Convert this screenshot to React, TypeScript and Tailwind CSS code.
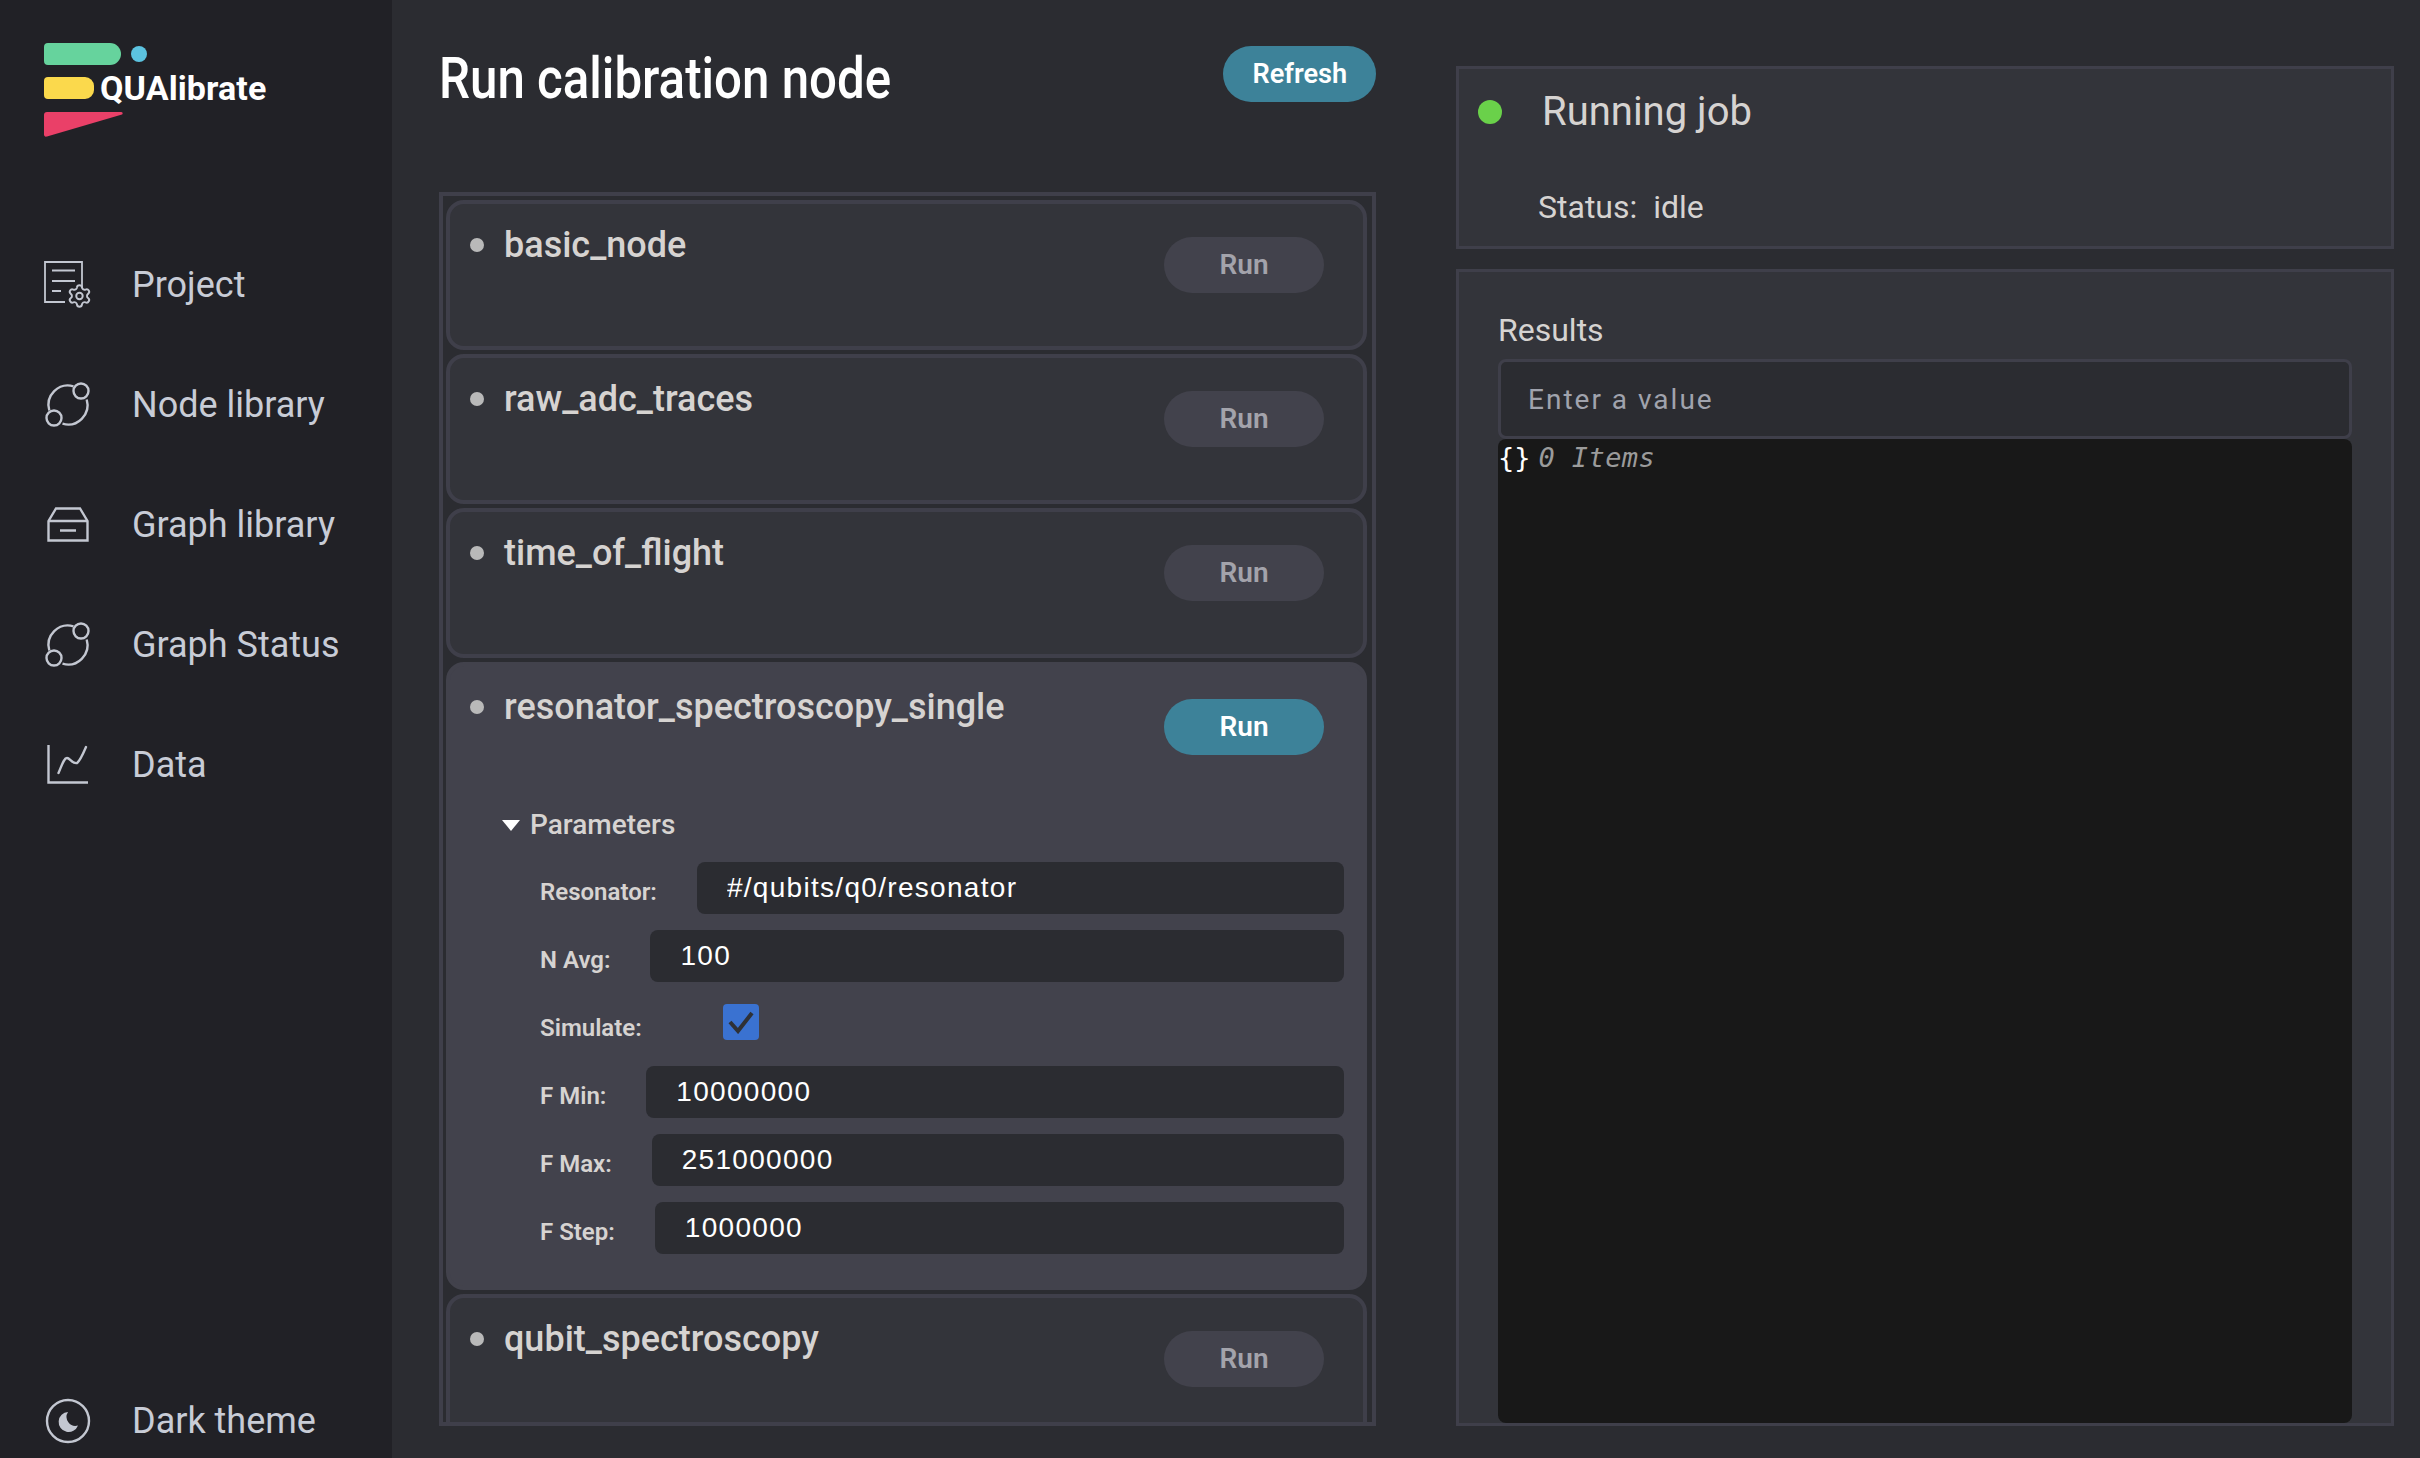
import type { ReactNode } from "react";

const navItems = [
  { label: "Project", icon: "project" },
  { label: "Node library", icon: "orbit" },
  { label: "Graph library", icon: "tray" },
  { label: "Graph Status", icon: "orbit" },
  { label: "Data", icon: "chart" },
];

function NavIcon({ name }: { name: string }) {
  const common = {
    fill: "none",
    stroke: "#c3c7d1",
    strokeWidth: 2.4,
  };
  if (name === "project") {
    return (
      <svg width="48" height="48" viewBox="0 0 48 48" {...common} strokeWidth={1.8}>
        <path d="M21 41H1V1h37v26" />
        <path d="M8 9.500h23M8 20h23M8 30h9" />
        <g transform="translate(22.500 22) scale(1.08)" strokeWidth={1.8}>
          <path d="M9.671 4.136a2.34 2.34 0 0 1 4.659 0 2.34 2.34 0 0 0 3.319 1.915 2.34 2.34 0 0 1 2.33 4.033 2.34 2.34 0 0 0 0 3.831 2.34 2.34 0 0 1-2.33 4.033 2.34 2.34 0 0 0-3.319 1.915 2.34 2.34 0 0 1-4.659 0 2.34 2.34 0 0 0-3.32-1.915 2.34 2.34 0 0 1-2.33-4.033 2.34 2.34 0 0 0 0-3.831A2.34 2.34 0 0 1 6.35 6.051a2.34 2.34 0 0 0 3.32-1.915" />
          <circle cx="12" cy="12" r="3" />
        </g>
      </svg>
    );
  }
  if (name === "orbit") {
    return (
      <svg width="48" height="48" viewBox="0 0 48 48" {...common}>
        <path d="M29.500 5.300A19.500 19.500 0 0 0 5.300 29.500" />
        <path d="M42.700 18.500A19.500 19.500 0 0 1 18.500 42.700" />
        <circle cx="37" cy="10" r="7.500" />
        <circle cx="10" cy="37" r="7.500" />
      </svg>
    );
  }
  if (name === "tray") {
    return (
      <svg width="48" height="48" viewBox="0 0 48 48" {...common}>
        <path d="M4.500 20 12 7.500h24L43.500 20v19.500h-39z" />
        <path d="M4.500 20h39M16 29.500h16" />
      </svg>
    );
  }
  return (
    <svg width="48" height="48" viewBox="0 0 48 48" {...common}>
      <path d="M4.500 4v37.500H44" />
      <path d="M14.500 32c3.500-8 5.500-15 8.500-15s5 6 10 5c3-2 6-9 9-16" strokeLinecap="round" />
    </svg>
  );
}

function Logo() {
  return (
    <div className="flex flex-col pl-[44px] pt-[43px]">
      <div className="flex items-center gap-[10px]">
        <div className="h-[22px] w-[77px] rounded-l-[4px] rounded-r-[11px] bg-[#66d39d]" />
        <div className="h-4 w-4 rounded-full bg-[#5cc3e0]" />
      </div>
      <div className="mt-3 flex h-[22px] items-center gap-[6px]">
        <div className="h-[22px] w-[50px] rounded-l-[4px] rounded-r-[9px] bg-[#fbd94c]" />
        <span className="text-[34px] leading-none font-bold tracking-[0.1px] text-white">QUAlibrate</span>
      </div>
      <svg className="mt-[13px]" width="80" height="25" viewBox="0 0 80 25">
        <path d="M3 0h74c2 0 2 2 1 2.500L3 24.500c-2 .5-3-.5-3-2V3c0-2 1-3 3-3z" fill="#ea4068" />
      </svg>
    </div>
  );
}

function Sidebar() {
  return (
    <aside className="flex h-full w-[392px] shrink-0 flex-col bg-[#212126]">
      <Logo />
      <nav className="mt-[88px] flex flex-col">
        {navItems.map((item) => (
          <div key={item.label} className="flex h-[120px] items-center gap-10 pl-[44px] text-[36px] text-[#c8ccd6]">
            <NavIcon name={item.icon} />
            <span>{item.label}</span>
          </div>
        ))}
      </nav>
      <div className="mt-auto mb-[13px] flex h-[48px] items-center gap-10 pl-[44px] text-[36px] text-[#c8ccd6]">
        <svg width="48" height="48" viewBox="0 0 48 48">
          <circle cx="24" cy="24" r="21" fill="none" stroke="#c3c7d1" strokeWidth="2.400" />
          <path d="M24 15a10 10 0 1 0 10 13.500 9 9 0 0 1-10-13.500z" fill="#c3c7d1" />
        </svg>
        <span>Dark theme</span>
      </div>
    </aside>
  );
}

function RunButton({ active }: { active?: boolean }) {
  return (
    <button
      className={
        active
          ? "h-14 w-40 rounded-full bg-[#3d8299] text-[28px] font-semibold text-white"
          : "h-14 w-40 rounded-full bg-[#42424c] text-[28px] font-semibold text-[#a3a3ab]"
      }
    >
      Run
    </button>
  );
}

function ParamRow({ label, value }: { label: string; value: string }) {
  return (
    <div className="flex h-[52px] items-center gap-10">
      <span className="mt-[7px] text-[24px] font-semibold text-[#d6d3d1]">{label}</span>
      <input
        readOnly
        value={value}
        className="h-[52px] min-w-0 flex-1 rounded-lg bg-[#2b2c31] px-[30px] font-['Liberation_Sans',sans-serif] text-[28px] tracking-[1.300px] text-white outline-none"
      />
    </div>
  );
}

function NodeItem({ name, active, children }: { name: string; active?: boolean; children?: ReactNode }) {
  return (
    <div
      className={
        active
          ? "shrink-0 rounded-[18px] border-4 border-[#42424c] bg-[#42424c] pb-[32px]"
          : "h-[150px] shrink-0 rounded-[18px] border-4 border-[#3f3f4a] bg-[#33343a]"
      }
    >
      <div className="flex items-start pt-[33px] pr-[39px] pl-5">
        <div className="flex h-[14px] flex-1 items-center gap-5">
          <div className="mt-[2px] h-[14px] w-[14px] shrink-0 rounded-full bg-[#b9b9b9]" />
          <span className="mt-[2px] text-[36px] font-medium text-[#d6d3d1]">{name}</span>
        </div>
        <RunButton active={active} />
      </div>
      {children}
    </div>
  );
}

function NodeList() {
  return (
    <div className="mt-[90px] flex min-h-0 flex-1 flex-col gap-1 overflow-hidden border-4 border-[#3f3f4a] pt-1 pr-[5px] pl-[3px]">
      <NodeItem name="basic_node" />
      <NodeItem name="raw_adc_traces" />
      <NodeItem name="time_of_flight" />
      <NodeItem name="resonator_spectroscopy_single" active>
        <div className="mt-[49px] flex flex-col gap-4 pr-[19px] pl-[52px]">
          <div className="flex items-center gap-[10px] text-[28px] font-medium text-[#d6d3d1]">
            <svg width="18" height="11" viewBox="0 0 18 11">
              <path d="M0 0h18L9 11z" fill="#fff" />
            </svg>
            <span>Parameters</span>
          </div>
          <div className="flex flex-col gap-4 pl-[38px]">
            <ParamRow label="Resonator:" value="#/qubits/q0/resonator" />
            <ParamRow label="N Avg:" value="100" />
            <div className="flex h-[52px] items-start gap-[81px]">
              <span className="mt-[12px] text-[24px] font-semibold text-[#d6d3d1]">Simulate:</span>
              <div className="mt-[6px] flex h-9 w-9 items-center justify-center rounded bg-[#3a72d1]">
                <svg width="28" height="24" viewBox="0 0 28 24">
                  <path d="M3 12l8 9L25 3" fill="none" stroke="#2f3136" strokeWidth="4" />
                </svg>
              </div>
            </div>
            <ParamRow label="F Min:" value="10000000" />
            <ParamRow label="F Max:" value="251000000" />
            <ParamRow label="F Step:" value="1000000" />
          </div>
        </div>
      </NodeItem>
      <NodeItem name="qubit_spectroscopy" />
    </div>
  );
}

export default function App() {
  return (
    <div className="flex h-screen w-full overflow-hidden bg-[#2b2c31] font-['Roboto',sans-serif]">
      <Sidebar />
      <main className="flex min-w-0 flex-1 gap-20 pr-[26px] pb-[32px] pl-[47px]">
        <section className="flex w-[937px] shrink-0 flex-col pt-[46px]">
          <div className="flex h-14 items-center justify-between">
            <h1 className="mt-[9px] origin-left scale-x-[0.864] text-[57px] font-medium whitespace-nowrap text-white">Run calibration node</h1>
            <button className="h-14 w-[153px] rounded-full bg-[#3d8299] text-[28px] font-semibold text-white">
              <span className="inline-block scale-x-[0.97]">Refresh</span>
            </button>
          </div>
          <NodeList />
        </section>
        <section className="flex min-w-0 flex-1 flex-col gap-5 pt-[66px]">
          <div className="h-[183px] border-[3px] border-[#3f3f4a] bg-[#33343a]">
            <div className="flex items-center gap-10 pt-[13px] pl-[19px]">
              <div className="h-6 w-6 rounded-full bg-[#6ad14a]" />
              <span className="text-[40px] text-[#d6d3d1]">Running job</span>
            </div>
            <div className="mt-[41px] flex gap-4 pl-[79px] text-[32px] text-[#d6d3d1]">
              <span>Status:</span>
              <span>idle</span>
            </div>
          </div>
          <div className="flex min-h-0 flex-1 flex-col border-[3px] border-[#3f3f4a] bg-[#33343a] px-[39px] pt-[34px]">
            <div className="text-[32px] text-[#d6d3d1]">Results</div>
            <input
              placeholder="Enter a value"
              className="mt-[5px] h-[80px] shrink-0 rounded-lg border-[3px] border-[#3f3f4a] bg-[#2b2c31] px-[27px] text-[28px] tracking-[2px] text-white outline-none placeholder:text-[#a0a3ad]"
            />
            <div className="flex-1 rounded-lg bg-[#181818] pt-[1px] font-['DejaVu_Sans_Mono',monospace] text-[27px] leading-[36px]">
              <span className="text-white">{"{}"}</span>
              <span className="ml-2 tracking-[0.4px] text-[#9b9b9b] italic">0 Items</span>
            </div>
          </div>
        </section>
      </main>
    </div>
  );
}
